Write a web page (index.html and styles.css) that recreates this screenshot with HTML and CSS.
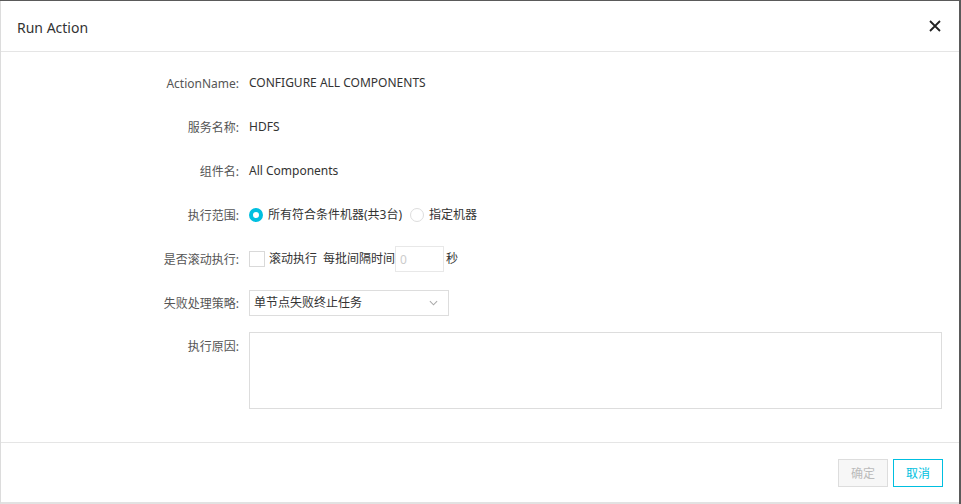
FILE: index.html
```html
<!DOCTYPE html>
<html lang="zh-CN">
<head>
    <meta charset="UTF-8">
    <meta name="viewport" content="width=device-width, initial-scale=1.0">
    <title>Run Action</title>
    <link rel="stylesheet" href="styles.css">
</head>
<body>
    <div class="modal">
        <div class="modal-header">
            <span class="modal-title">Run Action</span>
            <button class="close-button" title="Close">
                <svg viewBox="0 0 12 12" class="close-icon">
                    <path d="M1 1L11 11M11 1L1 11"></path>
                </svg>
            </button>
        </div>

        <div class="modal-body">
            <div class="form-row">
                <label class="form-label">ActionName:</label>
                <div class="form-value">CONFIGURE ALL COMPONENTS</div>
            </div>
            <div class="form-row">
                <label class="form-label">服务名称:</label>
                <div class="form-value">HDFS</div>
            </div>
            <div class="form-row">
                <label class="form-label">组件名:</label>
                <div class="form-value">All Components</div>
            </div>
            <div class="form-row">
                <label class="form-label">执行范围:</label>
                <div class="form-value">
                    <span class="radio checked"></span>
                    <span class="radio-text">所有符合条件机器(共3台)</span>
                    <span class="radio"></span>
                    <span class="radio-text">指定机器</span>
                </div>
            </div>
            <div class="form-row">
                <label class="form-label">是否滚动执行:</label>
                <div class="form-value">
                    <span class="checkbox"></span>
                    <span class="check-text">滚动执行</span>
                    <span class="interval-text">每批间隔时间</span>
                    <input type="text" class="interval-input" placeholder="0">
                    <span class="unit-text">秒</span>
                </div>
            </div>
            <div class="form-row">
                <label class="form-label">失败处理策略:</label>
                <div class="form-value">
                    <div class="select">
                        <span>单节点失败终止任务</span>
                        <svg viewBox="0 0 10 6" class="select-arrow">
                            <path d="M1 1L5 5L9 1"></path>
                        </svg>
                    </div>
                </div>
            </div>
            <div class="form-row textarea-row">
                <label class="form-label">执行原因:</label>
                <div class="form-value">
                    <textarea class="reason"></textarea>
                </div>
            </div>
        </div>

        <div class="modal-footer">
            <button class="btn btn-disabled" disabled>确定</button>
            <button class="btn btn-cancel">取消</button>
        </div>
    </div>
</body>
</html>
```

FILE: styles.css
```css
body {
    margin: 0;
    background-color: #5a5a5a;
    font-family: "Noto Sans", "Noto Sans CJK SC", sans-serif;
    font-size: 12px;
    color: #333;
}

.modal {
    width: 958px;
    height: 501px;
    margin-top: 1px;
    background-color: #fff;
    border-left: 1px solid #dcdcdc;
    border-bottom: 2px solid #e2e2e2;
    display: flex;
    flex-direction: column;
}

.modal-header {
    height: 50px;
    padding: 0 17px 0 16px;
    border-bottom: 1px solid #e5e5e5;
    display: flex;
    align-items: center;
    justify-content: space-between;
}

.modal-title {
    font-size: 14px;
    color: #333;
    padding-top: 3px;
}

.close-button {
    background: none;
    border: none;
    padding: 0;
    margin-right: 1px;
    cursor: pointer;
    display: flex;
}

.close-icon {
    width: 12px;
    height: 12px;
    stroke: #222;
    stroke-width: 1.8;
    fill: none;
}

.modal-body {
    flex-grow: 1;
    padding: 18px 17px 0 0;
    display: flex;
    flex-direction: column;
    gap: 18px;
}

.form-row {
    display: flex;
    align-items: center;
    min-height: 26px;
}

.form-label {
    width: 248px;
    flex-shrink: 0;
    text-align: right;
    padding-right: 10px;
    box-sizing: border-box;
    color: #555;
}

.form-value {
    flex-grow: 1;
    display: flex;
    align-items: center;
    line-height: 26px;
}

.radio {
    width: 14px;
    height: 14px;
    border-radius: 50%;
    border: 1px solid #ddd;
    box-sizing: border-box;
    background-color: #fff;
    margin-right: 5px;
}

.radio.checked {
    border: 4px solid #00bfe0;
    background-color: #fff;
}

.radio-text {
    margin-right: 8px;
}

.checkbox {
    width: 16px;
    height: 16px;
    border: 1px solid #d9d9d9;
    box-sizing: border-box;
    margin-right: 4px;
}

.check-text {
    margin-right: 6px;
}

.interval-input {
    width: 49px;
    height: 26px;
    box-sizing: border-box;
    border: 1px solid #e8e8e8;
    padding: 0 4px;
    margin: 0 2px 0 0;
    font-family: inherit;
    font-size: 12px;
    outline: none;
}

.interval-input::placeholder {
    color: #ccc;
}

.select {
    width: 200px;
    height: 26px;
    box-sizing: border-box;
    border: 1px solid #ddd;
    padding: 0 10px 0 4px;
    display: flex;
    align-items: center;
    justify-content: space-between;
}

.select-arrow {
    width: 9px;
    height: 6px;
    stroke: #aaa;
    stroke-width: 1.2;
    fill: none;
}

.textarea-row {
    align-items: flex-start;
    margin-top: -2px;
}

.textarea-row .form-label {
    padding-top: 2px;
    line-height: 26px;
}

.reason {
    width: 100%;
    height: 77px;
    box-sizing: border-box;
    border: 1px solid #ddd;
    resize: none;
    outline: none;
    font-family: inherit;
}

.modal-footer {
    height: 60px;
    border-top: 1px solid #e5e5e5;
    padding: 16px 16px 0 0;
    box-sizing: border-box;
    display: flex;
    justify-content: flex-end;
    align-items: flex-start;
    gap: 5px;
}

.btn {
    width: 50px;
    height: 28px;
    font-family: inherit;
    font-size: 12px;
    background-color: #fff;
    cursor: pointer;
}

.btn-disabled {
    background-color: #f7f7f7;
    border: 1px solid #ddd;
    color: #bbb;
    cursor: not-allowed;
}

.btn-cancel {
    border: 1px solid #00bfe0;
    color: #00bfe0;
}
```
